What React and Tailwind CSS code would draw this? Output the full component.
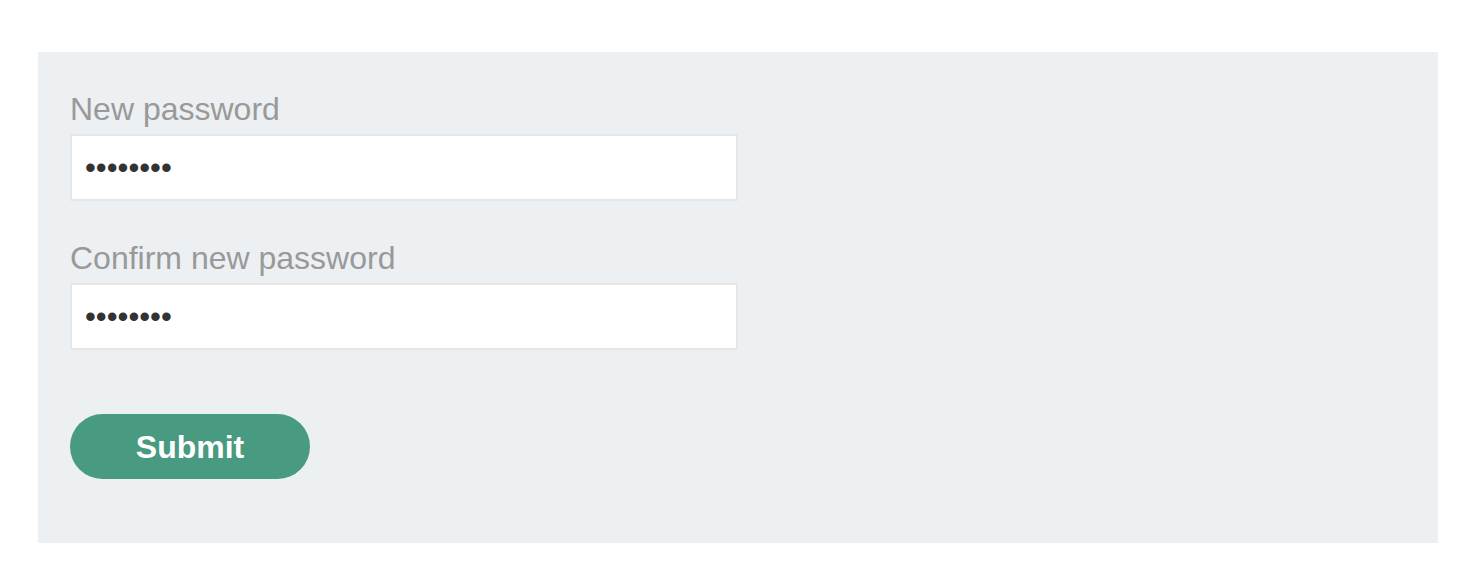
import React from "react";

export default function App() {
  return (
    <div className="min-h-[588px] bg-white pt-[52px] pl-[38px]" style={{ fontFamily: '"Liberation Sans", Arial, Helvetica, sans-serif' }}>
      <form
        className="w-[1400px] h-[491px] bg-[#ecf0f3] pl-[32px] pt-[39px] box-border"
        onSubmit={(e) => e.preventDefault()}
      >
        <label className="block text-[32px] leading-[36px] text-[#999999]">New password</label>
        <input
          type="password"
          defaultValue="12345678"
          className="mt-[7px] block w-[668px] h-[67px] border-2 border-[#e6e6e6] bg-white px-[13px] text-[31px] text-[#333333] outline-none box-border"
        />
        <label className="mt-[39px] block text-[32px] leading-[36px] text-[#999999]">Confirm new password</label>
        <input
          type="password"
          defaultValue="12345678"
          className="mt-[7px] block w-[668px] h-[67px] border-2 border-[#e6e6e6] bg-white px-[13px] text-[31px] text-[#333333] outline-none box-border"
        />
        <button
          type="submit"
          className="mt-[64px] block w-[240px] h-[65px] rounded-full bg-[#489a80] text-white text-[32px] font-bold leading-none"
        >
          Submit
        </button>
      </form>
    </div>
  );
}
